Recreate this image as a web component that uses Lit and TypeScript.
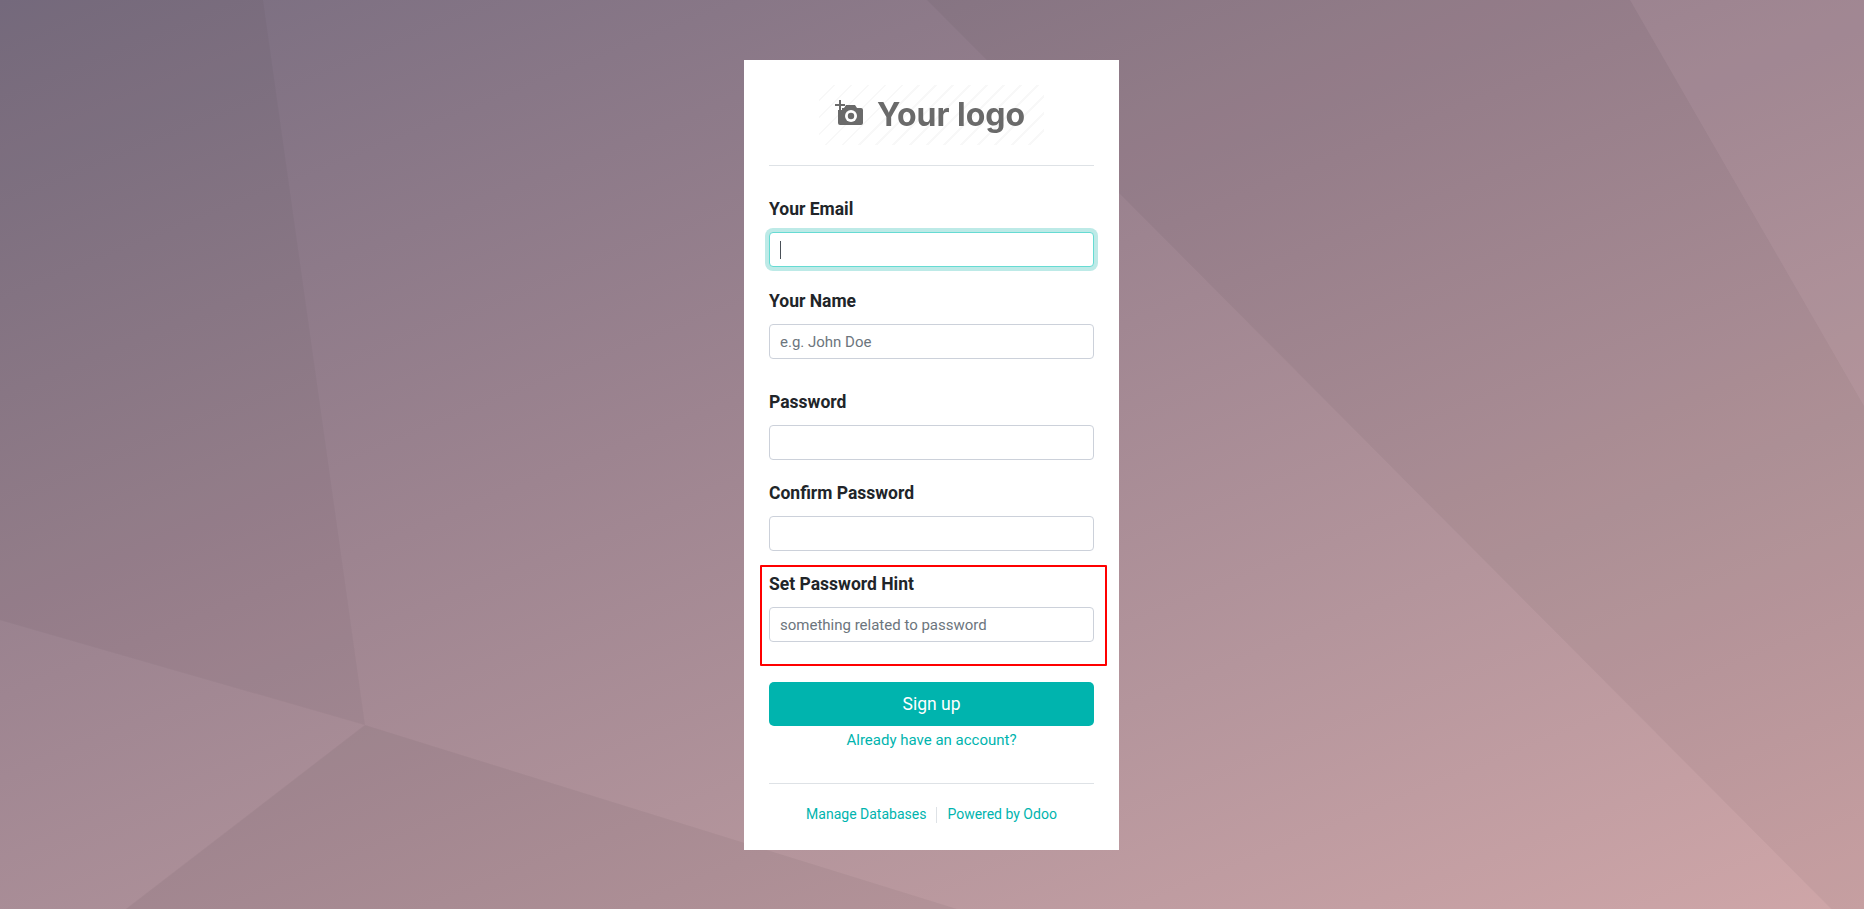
import { LitElement, html, css, svg } from "lit";
import { customElement } from "lit/decorators.js";

const FACETS = [
  { points: "0,0 263,0 365,725 0,620", fill: "rgba(0,0,0,0.03)" },
  { points: "0,620 365,725 126,909 0,909", fill: "rgba(255,255,255,0.012)" },
  { points: "365,725 957,909 126,909", fill: "rgba(0,0,0,0.045)" },
  { points: "927,0 1864,0 1864,942", fill: "rgba(0,0,0,0.04)" },
  { points: "1630,0 1864,0 1864,406", fill: "rgba(255,215,225,0.08)" },
];

@customElement("app-root")
export class AppRoot extends LitElement {
  static styles = css`
    :host {
      display: block;
      position: relative;
      min-height: 100vh;
      padding-top: 60px;
      box-sizing: border-box;
      overflow: hidden;
      font-family: Roboto, "Liberation Sans", sans-serif;
      color: #212529;
      background: linear-gradient(158deg, #786d80 0%, #9d8490 42%, #b4959c 70%, #cfa6a8 100%);
    }
    .facets {
      position: absolute;
      inset: 0;
      width: 100%;
      height: 100%;
    }
    .card {
      position: relative;
      box-sizing: border-box;
      width: 375px;
      height: 790px;
      margin-left: calc(50% - 188px);
      padding: 25px 25px 0;
      background: #fff;
    }
    .logo-row {
      display: flex;
      justify-content: center;
      padding-bottom: 20px;
      border-bottom: 1px solid #dee2e6;
      margin-bottom: 30px;
    }
    .logo {
      width: 225px;
      height: 60px;
      display: flex;
      align-items: center;
      gap: 14px;
      padding-left: 16px;
      box-sizing: border-box;
      background: repeating-linear-gradient(135deg, #fff 0 10px, #f8f8f8 10px 12px);
      color: #6a6a6a;
      filter: blur(0.5px);
    }
    .logo svg {
      flex: none;
      margin-top: -4px;
    }
    .logo span {
      font-family: Inter, sans-serif;
      font-weight: 700;
      font-size: 32px;
      line-height: 1;
    }
    .field {
      position: relative;
      margin-bottom: 20px;
    }
    .field.first {
      margin-bottom: 21px;
    }
    .field.gap {
      margin-bottom: 30px;
    }
    label {
      display: block;
      font-size: 17.5px;
      font-weight: 700;
      line-height: 26px;
      margin-bottom: 10px;
    }
    .box {
      position: relative;
      height: 35px;
    }
    input {
      display: block;
      box-sizing: border-box;
      width: 100%;
      height: 35px;
      padding: 0 10px;
      border: 1px solid #ccd1da;
      border-radius: 4px;
      outline: none;
      background: #fff;
      font: 400 15px Roboto, "Liberation Sans", sans-serif;
      color: #495057;
    }
    input::placeholder {
      color: #6c757d;
      opacity: 1;
    }
    input.focus {
      border-color: #66dbd3;
      box-shadow: 0 0 0 4px #bdeae7;
    }
    .caret {
      position: absolute;
      left: 11px;
      top: 9px;
      width: 1px;
      height: 18px;
      background: #495057;
    }
    .highlight {
      position: absolute;
      left: -9px;
      right: -13px;
      top: -6px;
      bottom: -24px;
      border: 2px solid #f00;
      border-radius: 1px;
      box-sizing: border-box;
      pointer-events: none;
    }
    .submit {
      display: block;
      width: 100%;
      height: 44px;
      margin-top: 40px;
      border: 0;
      border-radius: 5px;
      background: #00b4ae;
      color: #fff;
      font: 400 17.5px Roboto, "Liberation Sans", sans-serif;
    }
    .already {
      display: block;
      margin-top: 3px;
      text-align: center;
      font-size: 15px;
      line-height: 22px;
    }
    a {
      color: #00b4ae;
      text-decoration: none;
    }
    .footer {
      display: flex;
      justify-content: center;
      align-items: center;
      margin-top: 32px;
      padding-top: 20px;
      border-top: 1px solid #dee2e6;
      font-size: 14px;
      line-height: 21px;
    }
    .sep {
      width: 1px;
      height: 16px;
      margin: 0 10px;
      background: #dee2e6;
    }
  `;

  render() {
    return html`
      <svg class="facets" viewBox="0 0 1864 909" preserveAspectRatio="none">
        ${FACETS.map((f) => svg`<polygon points=${f.points} fill=${f.fill}></polygon>`)}
      </svg>
      <main class="card">
        <div class="logo-row">
          <div class="logo">
            <svg width="28" height="26" viewBox="0 0 28 26">
              <path
                fill="#6a6a6a"
                d="M5 8h4l2-3h9l2 3h4a2 2 0 0 1 2 2v13a2 2 0 0 1-2 2H5a2 2 0 0 1-2-2V10a2 2 0 0 1 2-2z"
              ></path>
              <path d="M5 0v10M0 5h10" stroke="#fff" stroke-width="4"></path>
              <path d="M5 0v10M0 5h10" stroke="#6a6a6a" stroke-width="2"></path>
              <circle cx="16" cy="16" r="6" fill="#fff"></circle>
              <circle cx="16" cy="16" r="3.2" fill="#6a6a6a"></circle>
            </svg>
            <span>Your logo</span>
          </div>
        </div>
        <form>
          <div class="field first">
            <label>Your Email</label>
            <div class="box">
              <input class="focus" type="text" />
              <span class="caret"></span>
            </div>
          </div>
          <div class="field gap">
            <label>Your Name</label>
            <input type="text" placeholder="e.g. John Doe" />
          </div>
          <div class="field">
            <label>Password</label>
            <input type="password" />
          </div>
          <div class="field">
            <label>Confirm Password</label>
            <input type="password" />
          </div>
          <div class="field">
            <label>Set Password Hint</label>
            <input type="text" placeholder="something related to password" />
            <div class="highlight"></div>
          </div>
          <button class="submit" type="button">Sign up</button>
          <a class="already" href="#">Already have an account?</a>
        </form>
        <div class="footer">
          <a href="#">Manage Databases</a>
          <span class="sep"></span>
          <a href="#">Powered by Odoo</a>
        </div>
      </main>
    `;
  }
}
